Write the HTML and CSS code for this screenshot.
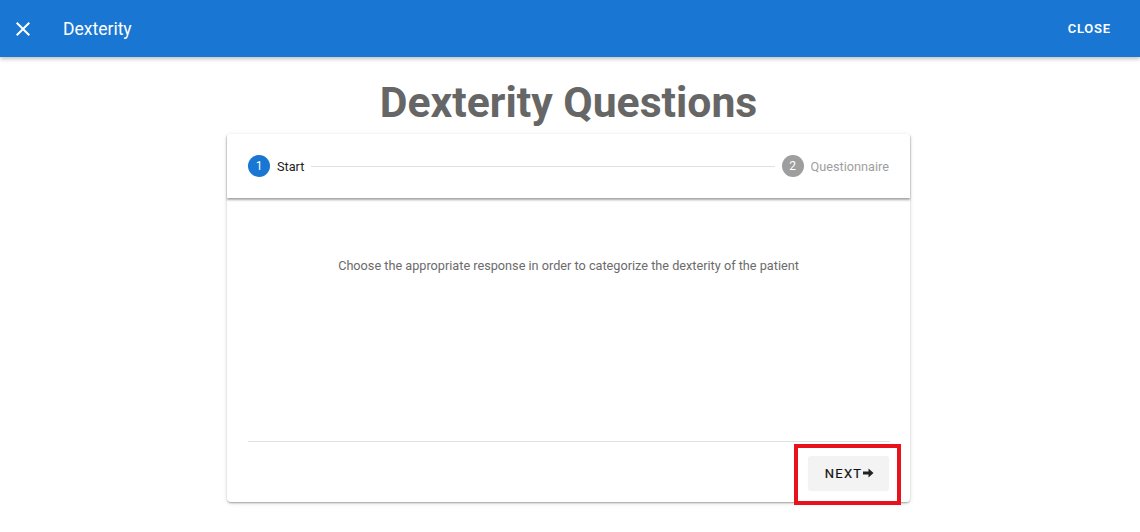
FILE: index.html
```html
<!DOCTYPE html>
<html>
<head>
<meta charset="utf-8">
<link rel="stylesheet" href="styles.css">
</head>
<body>
<header class="toolbar">
  <div class="tb-left">
    <svg class="x-icon" width="24" height="24" viewBox="0 0 24 24"><path d="M19 6.41L17.59 5 12 10.59 6.41 5 5 6.41 10.59 12 5 17.59 6.41 19 12 13.41 17.59 19 19 17.59 13.41 12z" fill="#fff"/></svg>
    <span class="tb-title">Dexterity</span>
  </div>
  <span class="tb-close">CLOSE</span>
</header>
<main class="main">
  <h1 class="page-title">Dexterity Questions</h1>
  <section class="card">
    <div class="stepper">
      <div class="step">
        <span class="dot active">1</span>
        <span class="label active-label">Start</span>
      </div>
      <div class="connector"></div>
      <div class="step">
        <span class="dot">2</span>
        <span class="label">Questionnaire</span>
      </div>
    </div>
    <div class="content">
      <p class="intro">Choose the appropriate response in order to categorize the dexterity of the patient</p>
    </div>
    <div class="actions">
      <div class="highlight">
        <button class="next">NEXT<svg width="11" height="10" viewBox="0 0 11 10"><path d="M0 3.5h5.5V0.5L10.5 5 5.5 9.5V6.5H0z" fill="#222"/></svg></button>
      </div>
    </div>
  </section>
</main>
</body>
</html>
```
FILE: styles.css
```css
* { box-sizing: border-box; }
html, body { margin: 0; padding: 0; }
body {
  width: 1140px;
  height: 532px;
  background: #fff;
  font-family: Roboto, "Liberation Sans", sans-serif;
  overflow: hidden;
}
.toolbar {
  height: 57px;
  background: #1976d2;
  display: flex;
  align-items: center;
  justify-content: space-between;
  padding: 0 29px 0 11px;
  color: #fff;
  box-shadow: 0 2px 4px rgba(0,0,0,0.25);
  position: relative;
  z-index: 2;
}
.tb-left { display: flex; align-items: center; }
.x-icon { width: 24px; height: 24px; }
.tb-title {
  margin-left: 28px;
  font-size: 17.5px;
  font-weight: 400;
  letter-spacing: 0;
}
.tb-close {
  font-size: 13px;
  font-weight: 600;
  letter-spacing: 0.8px;
}
.main {
  width: 1137px;
  display: flex;
  flex-direction: column;
  align-items: center;
}
.page-title {
  margin: 20px 0 0;
  font-size: 42.7px;
  line-height: 50px;
  font-weight: 700;
  color: #666;
  height: 57px;
}
.card {
  width: 683px;
  height: 368px;
  background: #fff;
  border-radius: 4px;
  box-shadow: 0 2px 2px -1px rgba(0,0,0,0.2), 0 1px 5px 0 rgba(0,0,0,0.12), 0 1px 2px 0 rgba(0,0,0,0.14);
  display: flex;
  flex-direction: column;
}
.stepper {
  height: 64px;
  display: flex;
  align-items: center;
  padding: 0 21px;
  box-shadow: 0 2px 2px rgba(0,0,0,0.35);
  position: relative;
}
.step { display: flex; align-items: center; }
.dot {
  width: 22px;
  height: 22px;
  border-radius: 50%;
  background: #9e9e9e;
  color: #fff;
  font-size: 12px;
  display: flex;
  align-items: center;
  justify-content: center;
}
.dot.active { background: #1976d2; }
.label {
  margin-left: 7px;
  font-size: 12.7px;
  color: #9e9e9e;
}
.active-label { color: #212121; }
.connector {
  flex: 1;
  height: 1px;
  background: #e0e0e0;
  margin: 0 7px;
}
.content {
  flex: 1;
  display: flex;
  justify-content: center;
  padding-top: 60px;
}
.intro {
  margin: 0;
  font-size: 12.7px;
  color: #6b6b6b;
  line-height: 16px;
}
.actions {
  margin: 0 20px 0 21px;
  border-top: 1px solid #e0e0e0;
  display: flex;
  justify-content: flex-end;
  height: 61px;
  padding-top: 2px;
}
.highlight {
  border: 4px solid #e8121d;
  width: 107px;
  height: 61px;
  margin-right: -11px;
  display: flex;
  align-items: center;
  justify-content: flex-start;
  padding-left: 10px;
}
.next {
  width: 81px;
  height: 34px;
  margin-top: -3px;
  border: none;
  border-radius: 3px;
  background: #f3f3f3;
  box-shadow: 0 1px 1px rgba(0,0,0,0.06);
  font-family: Roboto, "Liberation Sans", sans-serif;
  font-size: 13px;
  font-weight: 400;
  letter-spacing: 1.2px;
  color: #111;
  -webkit-text-stroke: 0.2px #111;
  display: flex;
  align-items: center;
  justify-content: center;
  gap: 1px;
  padding: 0 0 0 2px;
}
```
